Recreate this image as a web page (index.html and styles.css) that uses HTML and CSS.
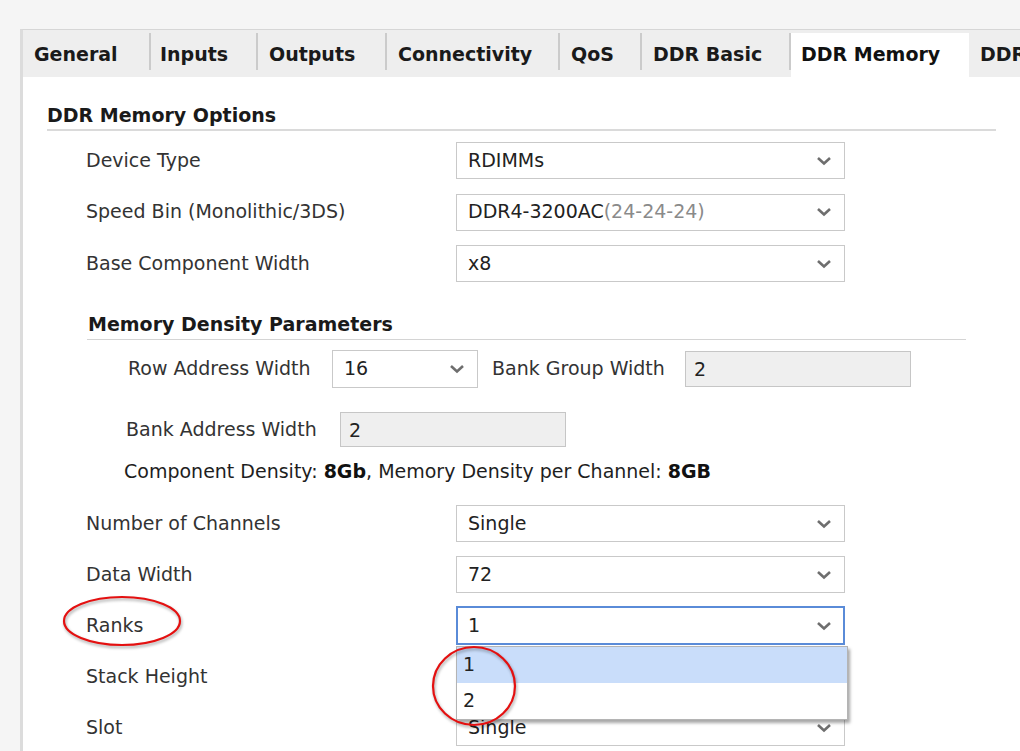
FILE: index.html
```html
<!DOCTYPE html>
<html>
<head>
<meta charset="utf-8">
<link rel="stylesheet" href="styles.css">
</head>
<body>
<div class="panel">
  <div class="tabs">
    <div class="tab w-general">General</div>
    <div class="tab w-inputs">Inputs</div>
    <div class="tab w-outputs">Outputs</div>
    <div class="tab w-conn">Connectivity</div>
    <div class="tab w-qos">QoS</div>
    <div class="tab w-basic">DDR Basic</div>
    <div class="tab active w-mem">DDR Memory</div>
    <div class="tab w-last">DDR</div>
  </div>
  <div class="content">
    <div class="section-title">DDR Memory Options</div>
    <div class="rows rows-top">
      <div class="row"><span class="label">Device Type</span><div class="select"><span class="val">RDIMMs</span><svg class="chev" width="16" height="10" viewBox="0 0 16 10"><path d="M2 2 L8 7.5 L14 2"/></svg></div></div>
      <div class="row"><span class="label">Speed Bin (Monolithic/3DS)</span><div class="select"><span class="val">DDR4-3200AC<span class="muted">(24-24-24)</span></span><svg class="chev" width="16" height="10" viewBox="0 0 16 10"><path d="M2 2 L8 7.5 L14 2"/></svg></div></div>
      <div class="row"><span class="label">Base Component Width</span><div class="select"><span class="val">x8</span><svg class="chev" width="16" height="10" viewBox="0 0 16 10"><path d="M2 2 L8 7.5 L14 2"/></svg></div></div>
    </div>

    <div class="subsection">
      <div class="sub-title">Memory Density Parameters</div>
      <div class="density-row first">
        <span class="dlabel l-row">Row Address Width</span>
        <div class="select small"><span class="val">16</span><svg class="chev" width="16" height="10" viewBox="0 0 16 10"><path d="M2 2 L8 7.5 L14 2"/></svg></div>
        <span class="dlabel l-bg">Bank Group Width</span>
        <div class="ro ro-bg">2</div>
      </div>
      <div class="density-row second">
        <span class="dlabel l-ba">Bank Address Width</span>
        <div class="ro ro-ba">2</div>
      </div>
      <div class="density-info">Component Density: <b>8Gb</b>, Memory Density per Channel: <b>8GB</b></div>
    </div>

    <div class="rows rows-bottom">
      <div class="row"><span class="label">Number of Channels</span><div class="select"><span class="val">Single</span><svg class="chev" width="16" height="10" viewBox="0 0 16 10"><path d="M2 2 L8 7.5 L14 2"/></svg></div></div>
      <div class="row"><span class="label">Data Width</span><div class="select"><span class="val">72</span><svg class="chev" width="16" height="10" viewBox="0 0 16 10"><path d="M2 2 L8 7.5 L14 2"/></svg></div></div>
      <div class="row"><span class="label">Ranks</span>
        <div class="select focused"><span class="val">1</span><svg class="chev" width="16" height="10" viewBox="0 0 16 10"><path d="M2 2 L8 7.5 L14 2"/></svg>
          <ul class="popup">
            <li class="opt hl">1</li>
            <li class="opt">2</li>
          </ul>
        </div>
      </div>
      <div class="row"><span class="label">Stack Height</span><div class="select"><span class="val"></span><svg class="chev" width="16" height="10" viewBox="0 0 16 10"><path d="M2 2 L8 7.5 L14 2"/></svg></div></div>
      <div class="row"><span class="label">Slot</span><div class="select"><span class="val">Single</span><svg class="chev" width="16" height="10" viewBox="0 0 16 10"><path d="M2 2 L8 7.5 L14 2"/></svg></div></div>
    </div>
  </div>
</div>

<svg class="annot annot-ranks" width="130" height="62" viewBox="0 0 130 62">
  <ellipse cx="63" cy="28" rx="58" ry="24"/>
</svg>
<svg class="annot annot-opts" width="96" height="94" viewBox="0 0 96 94">
  <ellipse cx="44" cy="42" rx="41" ry="39"/>
</svg>
</body>
</html>
```

FILE: styles.css
```css
html, body {
  margin: 0;
  padding: 0;
}
body {
  background: #f5f5f5;
  font-family: "DejaVu Sans", "Liberation Sans", sans-serif;
  font-size: 19px;
  color: #2a2a2a;
  width: 1020px;
  height: 751px;
  overflow: hidden;
  position: relative;
}
.panel {
  margin: 29px 0 0 20px;
  border-top: 1px solid #d6d6d6;
  border-left: 3px solid #dcdcdc;
  background: #ffffff;
  height: 740px;
  width: 997px;
  overflow: hidden;
}
.tabs {
  display: flex;
  background: #eeeeee;
  padding-top: 3px;
  height: 44px;
  box-sizing: content-box;
}
.tab {
  flex: none;
  box-sizing: border-box;
  height: 44px;
  padding: 8px 0 0 11px;
  line-height: 26px;
  font-weight: bold;
  color: #1a1a1a;
  white-space: nowrap;
  background: linear-gradient(#cbcbcb, #cbcbcb) right top / 2px 37px no-repeat;
}
.tab.active {
  background: #ffffff;
  color: #111;
  padding-left: 10px;
}
.w-general { width: 128px; }
.w-inputs { width: 107px; padding-left: 9px; }
.w-outputs { width: 129px; }
.w-conn { width: 173px; }
.w-qos { width: 82px; }
.w-basic { width: 149px; }
.w-mem { width: 178px; }
.w-last { flex: 1 1 auto; min-width: 0; background: none; }

.content {
  padding: 26px 0 0 24px;
}
.section-title {
  font-weight: bold;
  line-height: 24px;
  padding-bottom: 2px;
  border-bottom: 2px solid #dadada;
  width: 949px;
  color: #1a1a1a;
}
.rows {
  display: flex;
  flex-direction: column;
  gap: 14px;
  margin-left: 39px;
}
.rows-top {
  margin-top: 11px;
  gap: 14.5px;
}
.row {
  display: flex;
  align-items: center;
  height: 37px;
}
.label {
  width: 370px;
  flex: none;
  color: #333;
  padding-bottom: 2px;
}
.select {
  position: relative;
  box-sizing: border-box;
  width: 389px;
  height: 37px;
  border: 1px solid #c9c9c9;
  background: #fff;
  display: flex;
  align-items: center;
  justify-content: space-between;
  padding: 0 12px 0 11px;
}
.val {
  color: #222;
  white-space: nowrap;
  padding-bottom: 2px;
}
.muted { color: #8a8a8a; }
.chev path {
  fill: none;
  stroke: #6e6e6e;
  stroke-width: 2.6;
}
.select.focused {
  border: 2px solid #5a8bd8;
  padding: 0 11px 0 10px;
  height: 39px;
}

.subsection {
  margin: 30px 0 0 40px;
}
.sub-title {
  font-weight: bold;
  line-height: 24px;
  padding-bottom: 3px;
  border-bottom: 1px solid #d4d4d4;
  width: 878px;
  color: #1a1a1a;
  padding-left: 1px;
}
.density-row {
  display: flex;
  align-items: center;
}
.density-row.first {
  margin-top: 10px;
  height: 38px;
}
.density-row.second {
  margin-top: 24px;
  height: 35px;
}
.dlabel {
  flex: none;
  color: #333;
  padding-bottom: 2px;
}
.l-row { width: 204px; padding-left: 41px; box-sizing: content-box; }
.l-bg { width: 193px; margin-left: 14px; }
.l-ba { width: 214px; padding-left: 39px; box-sizing: content-box; }
.select.small {
  width: 146px;
  height: 38px;
}
.ro {
  box-sizing: border-box;
  background: #efefef;
  border: 1px solid #c6c6c6;
  padding-left: 8px;
  display: flex;
  align-items: center;
  color: #222;
}
.ro-bg { width: 226px; height: 36px; }
.ro-ba { width: 226px; height: 35px; }
.density-info {
  margin-top: 12px;
  padding-left: 37px;
  line-height: 24px;
  color: #1e1e1e;
}
.density-info b { color: #111; }
.rows-bottom {
  margin-top: 22px;
}

.popup {
  position: absolute;
  left: -2px;
  top: calc(100% + 3px);
  width: 390px;
  margin: 0;
  padding: 0;
  list-style: none;
  background: #fff;
  border: 1px solid #b4b4b4;
  box-shadow: 2px 3px 3px rgba(0, 0, 0, 0.35);
  z-index: 5;
}
.opt {
  height: 36px;
  line-height: 34px;
  padding-left: 6px;
  color: #222;
}
.opt.hl {
  background: #c9ddfa;
}

.annot {
  position: absolute;
  z-index: 10;
  overflow: visible;
}
.annot ellipse {
  fill: none;
  stroke: #e41010;
  stroke-width: 2.2;
  filter: drop-shadow(1px 2px 1.5px rgba(0, 0, 0, 0.35));
}
.annot-ranks { left: 59px; top: 593px; }
.annot-opts { left: 430px; top: 644px; }
```
